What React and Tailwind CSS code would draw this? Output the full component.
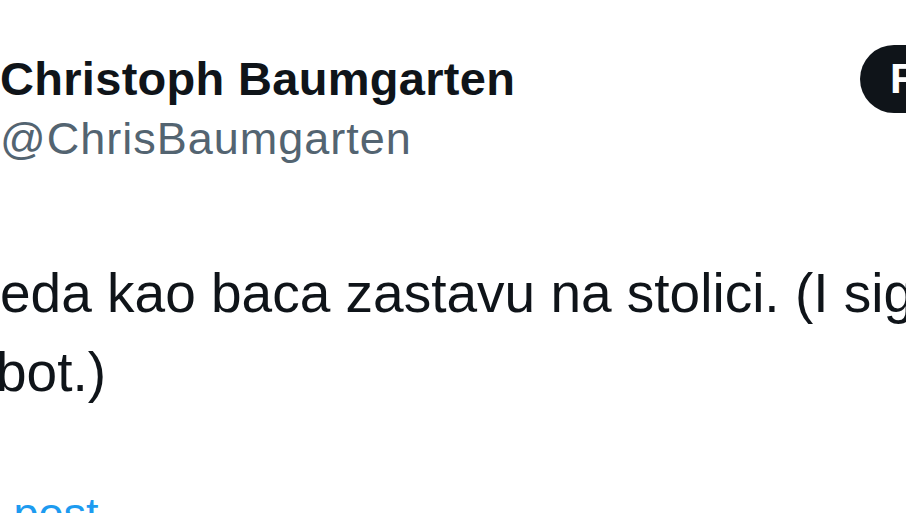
import React from "react";

// Cropped tweet card: header (name, handle, follow), body text, translate link.
export default function App() {
  return (
    <div className="h-[513px] w-[906px] overflow-hidden bg-white font-['Liberation_Sans',Arial,sans-serif] text-[#0f1419]">
      <div className="flex items-start pt-[45px]">
        <div className="min-w-0 flex-1 pt-[10px]">
          <div className="whitespace-nowrap text-[47px] font-bold leading-[47px] tracking-[0.3px]">
            Christoph Baumgarten
          </div>
          <div className="mt-[14px] whitespace-nowrap text-[45px] leading-[45px] tracking-[1px] text-[#536471]">
            @ChrisBaumgarten
          </div>
        </div>
        <button
          type="button"
          className="-mr-[147px] h-[68px] shrink-0 rounded-full bg-[#0f1419] px-[30px] text-[42px] font-bold leading-none text-white"
        >
          Follow
        </button>
      </div>

      <div className="mt-[93px] whitespace-nowrap text-[55px] leading-[79px]">
        <p>eda kao baca zastavu na stolici. (I sigurno nije</p>
        <p className="-ml-[4px]">bot.)</p>
      </div>

      <div className="-ml-[24px] mt-[79px] whitespace-nowrap text-[45px] leading-[45px] text-[#1d9bf0]">
        e post
      </div>
    </div>
  );
}
